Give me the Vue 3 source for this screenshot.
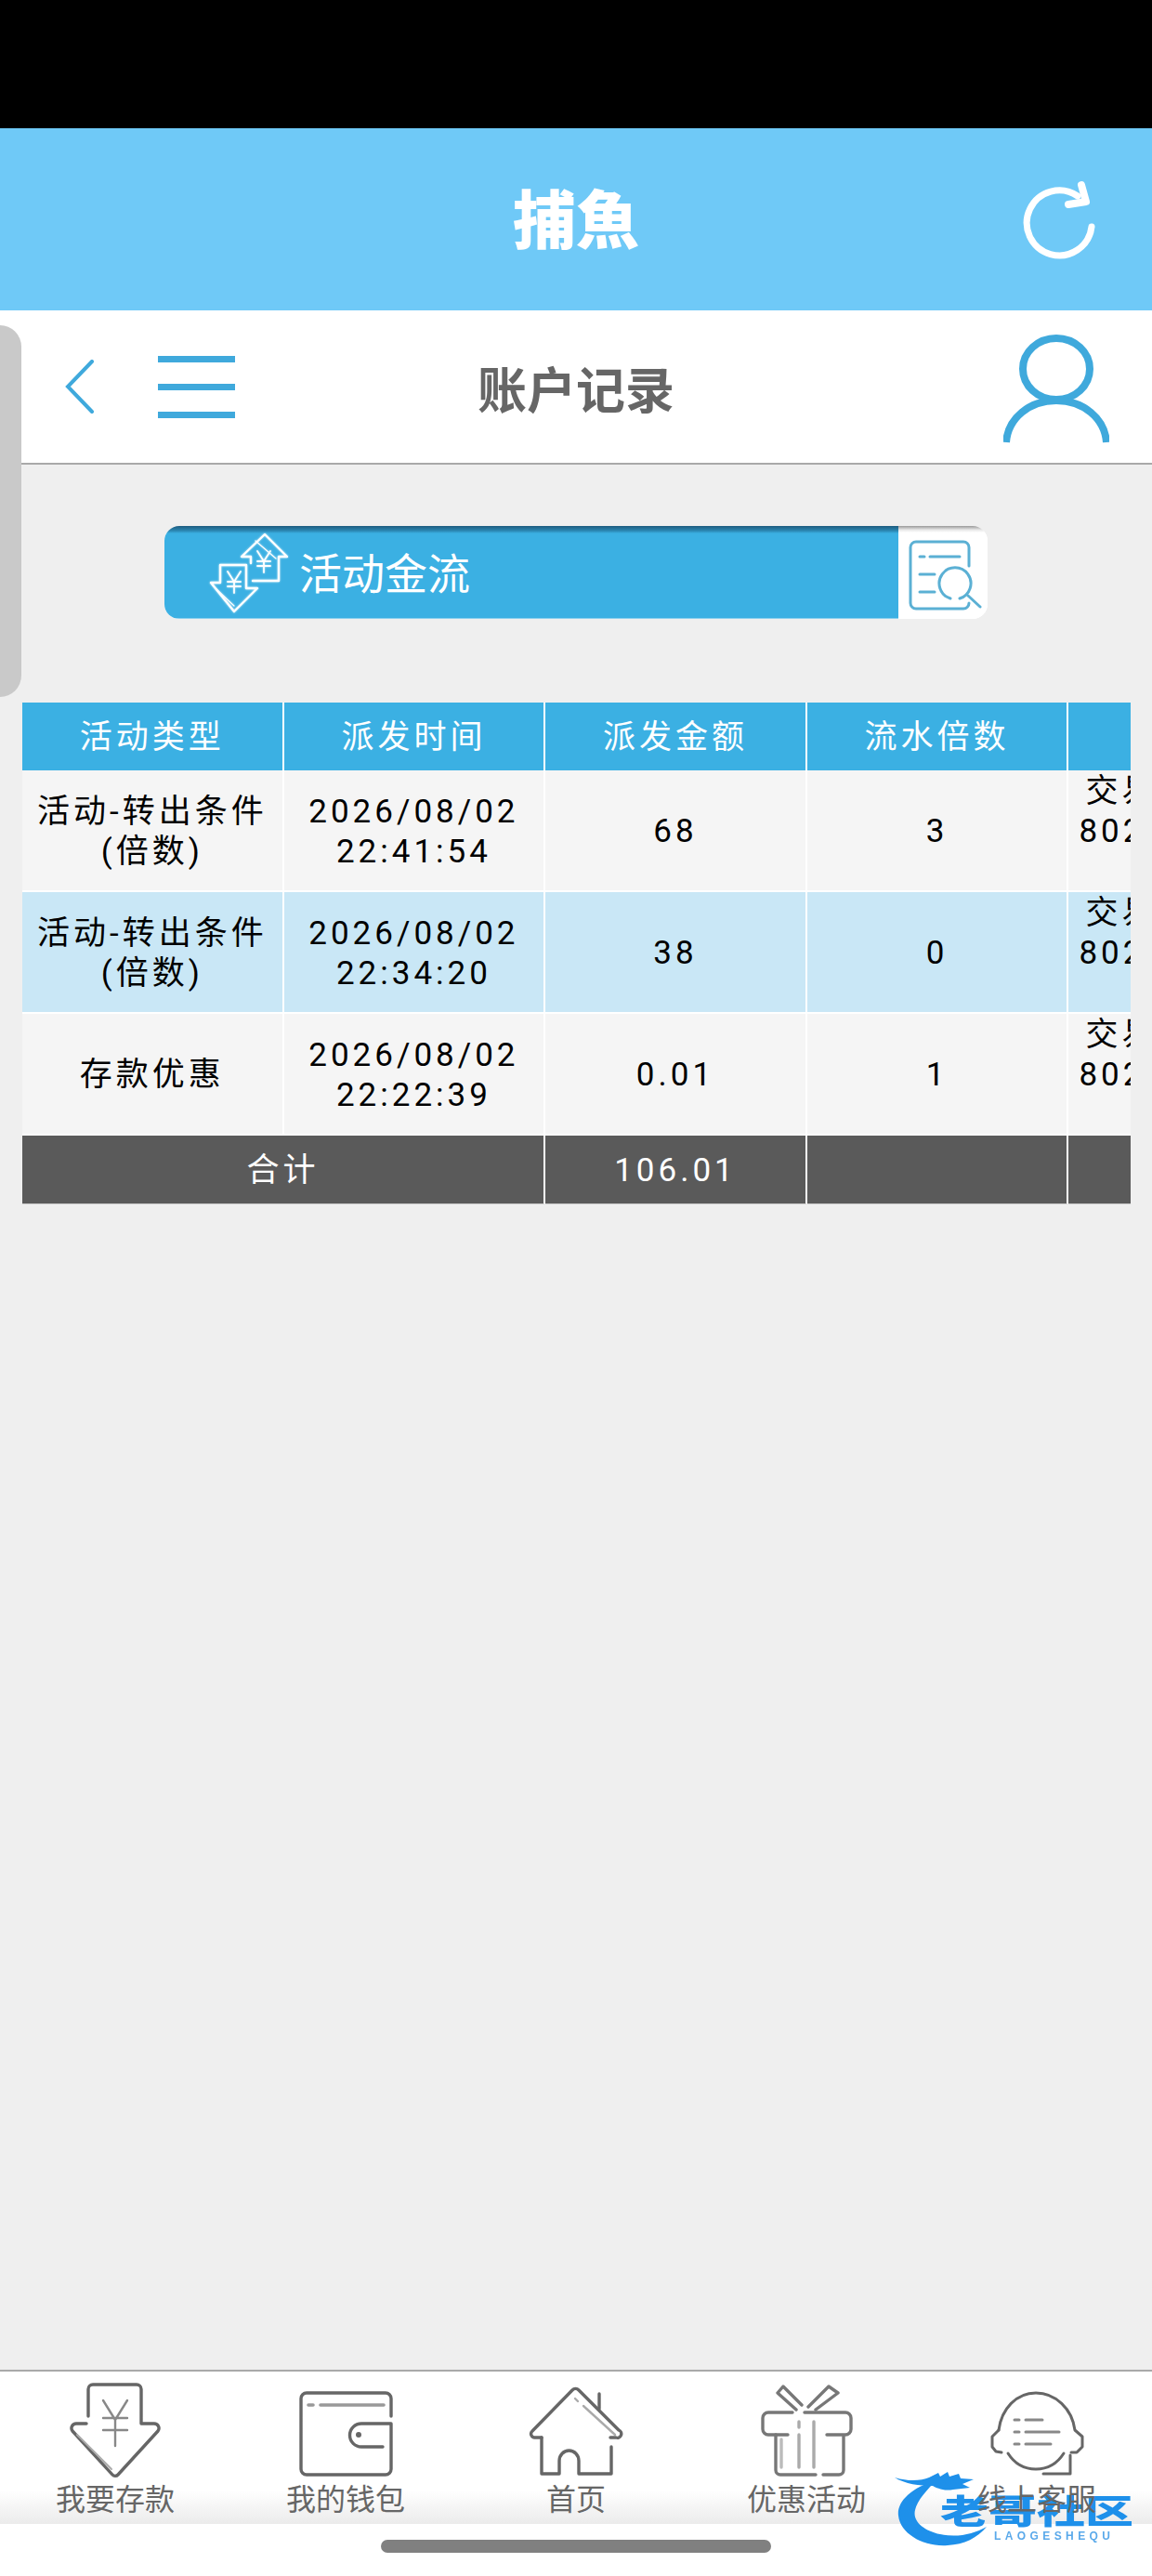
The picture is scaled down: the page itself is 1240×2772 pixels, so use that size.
<template>
  <div class="page">
    <div class="status"></div>

    <header class="top">
      <div></div>
      <h1>捕魚</h1>
      <div class="top-right">
        <svg width="110" height="100" viewBox="0 0 110 100" fill="none" stroke="#fff" stroke-linecap="round" stroke-linejoin="round">
          <path d="M85 58A35 35 0 1 1 70 25" stroke-width="7" />
          <path d="M74 13L79 31L60 34" stroke-width="8" />
        </svg>
      </div>
    </header>

    <nav class="bar">
      <div class="bar-left">
        <svg width="31" height="58" viewBox="0 0 31 58" fill="none" stroke="#3fa9dc" stroke-width="4" stroke-linecap="round">
          <path d="M29 2L3 29L29 56" />
        </svg>
        <div class="burger"><i></i><i></i><i></i></div>
      </div>
      <h2>账户记录</h2>
      <div class="bar-right">
        <svg width="114" height="118" viewBox="0 0 114 118" fill="none" stroke="#3fa9dc" stroke-width="8">
          <ellipse cx="57" cy="37" rx="36" ry="33" />
          <path d="M3 116C5 90 28 71 57 71C86 71 109 90 111 116" />
        </svg>
      </div>
    </nav>

    <main class="content">
      <div class="banner">
        <div class="banner-main">
          <svg class="glow" width="110" height="100" viewBox="0 0 110 100" fill="none" stroke="#fff" stroke-width="2.4" stroke-linejoin="round" stroke-linecap="round">
            <path d="M57 59H85V33H94L70 9L45 33H55V40" />
            <path d="M60 16L82 35" stroke-width="1.2" />
            <path d="M62 27L69 38L76 27M69 38V50M62 38H76M62 43H76" stroke-width="1.8" />
            <path d="M50 42H22V61H12L37 92L62 67H50V42Z" />
            <path d="M18 68L37 86" stroke-width="1.2" />
            <path d="M30 49L37 60L44 49M37 60V72M30 60H44M30 65H44" stroke-width="1.8" />
          </svg>
          <span>活动金流</span>
        </div>
        <div class="banner-side">
          <svg width="96" height="100" viewBox="2 1 96 100" fill="none" stroke="#5bb0d4" stroke-width="3" stroke-linecap="round" stroke-linejoin="round">
            <path d="M78 44V24a6 6 0 0 0-6-6H21a6 6 0 0 0-6 6V84a6 6 0 0 0 6 6H72a6 6 0 0 0 6-6" />
            <path d="M25 34H30M36 34H68M25 53H41M25 72H41" />
            <path d="M58 79A17 17 0 1 1 68 79" />
            <path d="M77 76L90 88" />
          </svg>
        </div>
      </div>

      <div class="table-wrap">
        <table>
          <thead>
            <tr>
              <th>活动类型</th>
              <th>派发时间</th>
              <th>派发金额</th>
              <th>流水倍数</th>
              <th></th>
            </tr>
          </thead>
          <tbody>
            <tr v-for="(row, index) in rows" :key="index" :class="{ alt: index % 2 === 1 }">
              <td>
                <template v-if="row.sub">{{ row.type }}<br />{{ row.sub }}</template>
                <template v-else>{{ row.type }}</template>
              </td>
              <td>{{ row.date }}<br />{{ row.time }}</td>
              <td>{{ row.amount }}</td>
              <td>{{ row.times }}</td>
              <td class="last">交易<br />802608</td>
            </tr>
          </tbody>
          <tfoot>
            <tr>
              <td colspan="2">合计</td>
              <td>106.01</td>
              <td></td>
              <td></td>
            </tr>
          </tfoot>
        </table>
      </div>
    </main>

    <footer class="tabs">
      <div class="tab">
        <svg class="soft" width="120" height="110" viewBox="0 0 120 110" fill="none" stroke="#666" stroke-width="3.4" stroke-linecap="round" stroke-linejoin="round">
          <path d="M31 40V11a5 5 0 0 1 5-5H83a5 5 0 0 1 5 5V48H102a5 5 0 0 1 4 8L63 103a4 4 0 0 1-6 0L14 56a5 5 0 0 1 4-8H29" />
          <path d="M19 60L56 97" stroke="#aaa" stroke-width="2" />
          <path d="M47 23L60 44L73 23M60 44V72M47 42H73M47 55H73" stroke="#888" stroke-width="2.4" />
        </svg>
        <span>我要存款</span>
      </div>
      <div class="tab">
        <svg class="soft" width="120" height="110" viewBox="0 0 120 110" fill="none" stroke="#666" stroke-width="3.4" stroke-linecap="round" stroke-linejoin="round">
          <path d="M109 40V21a6 6 0 0 0-6-6H18a6 6 0 0 0-6 6V97a6 6 0 0 0 6 6H103a6 6 0 0 0 6-6V48H77a12.5 12.5 0 0 0 0 25H100" />
          <path d="M20 28H25M33 28H101" stroke="#999" stroke-width="3.6" />
          <circle cx="74" cy="60" r="3" fill="#666" stroke="none" />
        </svg>
        <span>我的钱包</span>
      </div>
      <div class="tab">
        <svg class="soft" width="120" height="110" viewBox="0 0 120 110" fill="none" stroke="#666" stroke-width="3.4" stroke-linecap="round" stroke-linejoin="round">
          <path d="M23 63H16a4 4 0 0 1-3-7L56 12a5 5 0 0 1 7 0L106 55a4 4 0 0 1-3 8H97" />
          <path d="M23 63V102H42V88a10.500 11 0 0 1 21 0V102H98V73" />
          <path d="M85 16V32" />
          <path d="M59 21L62 24M68 29L102 60" stroke="#aaa" stroke-width="2.4" />
        </svg>
        <span>首页</span>
      </div>
      <div class="tab">
        <svg class="soft" width="120" height="110" viewBox="0 0 120 110" fill="none" stroke="#777" stroke-width="3.4" stroke-linecap="round" stroke-linejoin="round">
          <path d="M45 36H19a6 6 0 0 0-6 6V54a6 6 0 0 0 6 6H40M58 36H102a6 6 0 0 1 6 6V54a6 6 0 0 1-6 6H82" />
          <path d="M27 60V98a5 5 0 0 0 5 5H70M78 103H95a5 5 0 0 0 5-5V62" />
          <path d="M49 33L29 15L35 8L55 28M62 30L84 8L94 15L70 33" />
          <path d="M52 46V52M52 60V95M68 46V95" stroke="#aaa" />
          <path d="M33 65V95" stroke="#bbb" />
        </svg>
        <span>优惠活动</span>
      </div>
      <div class="tab">
        <svg class="soft" width="120" height="110" viewBox="0 0 120 110" fill="none" stroke="#666" stroke-width="3" stroke-linecap="round" stroke-linejoin="round">
          <path d="M19 55C22 32 38 15 59 15C80 15 98 32 101 55L109 62V73L103 79H97" />
          <path d="M19 55L12 62V73L16 78L22 79" />
          <path d="M29 80C36 91 46 97 59 97C72 97 82 91 89 80" />
          <path d="M96 82V102H67" />
          <path d="M36 44H41M48 44H66M36 57H41M48 57H84M36 70H41M48 70H75" stroke="#888" />
        </svg>
        <span class="over">线上客服</span>
      </div>
    </footer>

    <div class="gesture"><i></i></div>

    <!-- side handle and watermark lie over the page -->
    <div class="handle"></div>
    <div class="mark">
      <svg width="110" height="90" viewBox="0 0 110 90" fill="#1e90ea">
        <path d="M48 14C20 22 5 38 7 52C9 72 35 86 60 84C78 83 92 76 102 64C88 72 70 76 52 72C34 68 22 58 25 46C27 36 38 24 48 14Z" />
        <path d="M3 11C20 16 32 14 40 11L50 6L52 10L60 5L62 10L72 7L74 12L88 13L76 18L84 22L66 24C55 26 48 22 44 20C30 20 14 18 3 11Z" />
      </svg>
      <b>老哥社区</b>
      <small>LAOGESHEQU</small>
    </div>
  </div>
</template>

<script setup>
const rows = [
  { type: '活动-转出条件', sub: '(倍数)', date: '2026/08/02', time: '22:41:54', amount: '68', times: '3' },
  { type: '活动-转出条件', sub: '(倍数)', date: '2026/08/02', time: '22:34:20', amount: '38', times: '0' },
  { type: '存款优惠', sub: '', date: '2026/08/02', time: '22:22:39', amount: '0.01', times: '1' }
]
</script>

<style>
html, body {
  margin: 0;
  background: #efefef;
}
</style>

<style scoped>
.page {
  position: relative;
  width: 1240px;
  height: 2772px;
  display: flex;
  flex-direction: column;
  overflow: hidden;
  background: #efefef;
  font-family: Roboto, "Noto Sans CJK SC", sans-serif;
}

.status {
  height: 138px;
  background: #000;
}

.top {
  height: 196px;
  display: grid;
  grid-template-columns: 1fr auto 1fr;
  align-items: center;
  background: #6fc9f7;
}
.top h1 {
  margin: 6px 0 0;
  font-size: 68px;
  line-height: 80px;
  font-weight: 900;
  color: #fff;
}
.top-right {
  display: flex;
  justify-content: flex-end;
  padding-right: 40px;
}

.bar {
  height: 164px;
  display: grid;
  grid-template-columns: 1fr auto 1fr;
  align-items: center;
  background: #fff;
  border-bottom: 2px solid #a9a9a9;
}
.bar h2 {
  margin: 12px 0 0;
  font-size: 53px;
  line-height: 60px;
  font-weight: 700;
  color: #666;
}
.bar-left {
  display: flex;
  align-items: center;
  gap: 69px;
  padding-left: 70px;
}
.burger {
  width: 83px;
  display: flex;
  flex-direction: column;
  gap: 23px;
}
.burger i {
  display: block;
  height: 7px;
  background: #3fa9dc;
}
.bar-right {
  display: flex;
  justify-content: flex-end;
  padding: 6px 46px 0 0;
}

.content {
  flex: 1;
  padding-top: 66px;
}

.banner {
  width: 886px;
  height: 100px;
  margin: 0 auto;
  display: flex;
  border-radius: 16px;
  overflow: hidden;
  background: #fff;
}
.banner-main {
  flex: 1;
  display: flex;
  align-items: center;
  padding-left: 38px;
  color: #fff;
  font-size: 46px;
  font-weight: 400;
  background: linear-gradient(#1d5c80, #2a85b0 5px, #3bb0e3 8px);
  border-bottom: 1px solid #8fd0ee;
}
.banner-main span {
  margin: -3px 0 0 -3px;
}
.glow {
  filter: drop-shadow(0 0 1px rgba(255, 255, 255, 0.7));
}
.banner-side {
  width: 96px;
  background: linear-gradient(#9a9a9a, #e6e6e6 4px, #fff 7px);
}
.banner-side svg {
  display: block;
  filter: blur(0.5px);
}

.table-wrap {
  margin: 90px 23px 0 24px;
  overflow: hidden;
}
table {
  width: 1408px;
  table-layout: fixed;
  border-collapse: separate;
  border-spacing: 0;
  font-size: 35px;
  letter-spacing: 4px;
  line-height: 43px;
  text-align: center;
  color: #000;
}
th, td {
  box-sizing: border-box;
  padding: 2px 0 0;
  border-right: 2px solid #fff;
}
thead th {
  height: 73px;
  font-weight: 400;
  color: #fff;
  background: #3bb0e3;
}
tbody td {
  height: 131px;
  background: #f5f5f5;
  border-bottom: 2px solid #fff;
}
tbody tr.alt td {
  background: #c9e7f6;
}
tbody td.last {
  vertical-align: top;
  padding: 1px 0 0 11px;
  text-align: left;
  text-indent: 7px;
  white-space: nowrap;
}
tfoot td {
  height: 74px;
  font-weight: 400;
  color: #fff;
  background: #5a5a5a;
  border-bottom: 1px solid #c8c8c8;
}

.tabs {
  display: flex;
  padding: 8px 0 6px;
  border-top: 2px solid #a9a9a9;
  background: linear-gradient(#fff 78%, #ebebeb);
}
.tab {
  flex: 1;
  display: flex;
  flex-direction: column;
  align-items: center;
  font-size: 32px;
  line-height: 40px;
  color: #666;
}
.tab span {
  white-space: nowrap;
}
.tab .over {
  position: relative;
  z-index: 3;
}
.soft {
  display: block;
  filter: blur(0.6px);
}

.gesture {
  height: 56px;
  padding-top: 17px;
  box-sizing: border-box;
  background: #fff;
}
.gesture i {
  display: block;
  width: 420px;
  height: 14px;
  margin: 0 auto;
  border-radius: 7px;
  background: #808080;
}

.handle {
  position: absolute;
  left: 0;
  top: 350px;
  width: 23px;
  height: 400px;
  border-radius: 0 24px 24px 0;
  background: #c9c9c9;
}

.mark {
  position: absolute;
  left: 960px;
  top: 2655px;
  width: 265px;
  height: 90px;
  z-index: 2;
  filter: blur(0.6px);
}
.mark svg {
  display: block;
}
.mark b {
  position: absolute;
  left: 52px;
  top: 29px;
  font-size: 52px;
  line-height: 40px;
  font-weight: 900;
  color: #1e90ea;
  white-space: nowrap;
  transform: scaleY(0.7);
}
.mark small {
  position: absolute;
  left: 110px;
  top: 68px;
  font-family: "Liberation Sans", sans-serif;
  font-size: 12px;
  line-height: 12px;
  font-weight: 700;
  letter-spacing: 4.4px;
  color: #5aa9ea;
  white-space: nowrap;
}
</style>
